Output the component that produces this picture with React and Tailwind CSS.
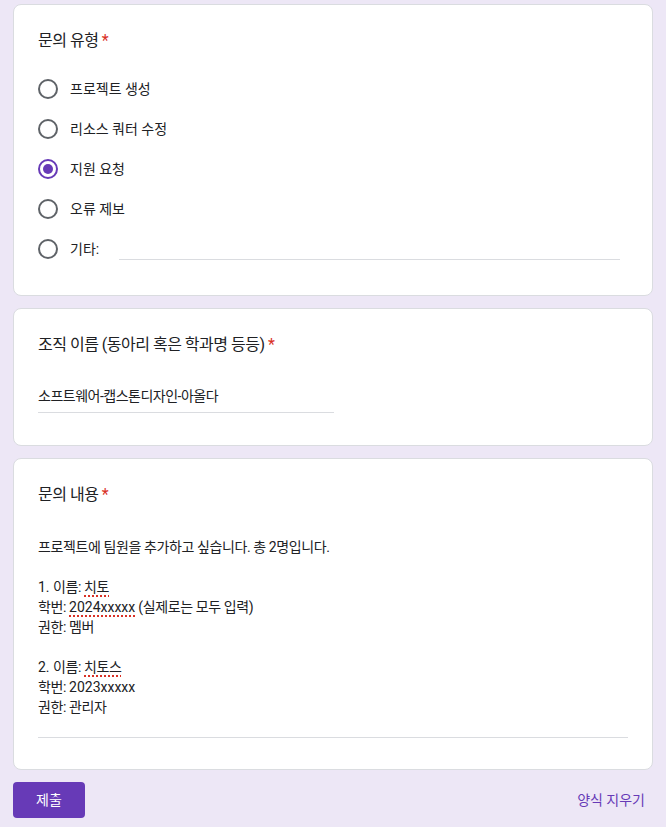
const options = ['프로젝트 생성', '리소스 쿼터 수정', '지원 요청', '오류 제보']

const Radio = ({ checked }) => (
  <span className={`flex h-5 w-5 shrink-0 items-center justify-center rounded-full border-2 ${checked ? 'border-[#673ab7]' : 'border-[#5f6368]'}`}>
    {checked && <span className="h-2.5 w-2.5 rounded-full bg-[#673ab7]" />}
  </span>
)

const Title = ({ children }) => (
  <h2 className="text-base leading-6 tracking-[-0.5px] text-[#202124]">
    {children} <span className="text-[#d93025]">*</span>
  </h2>
)

const Spell = ({ children }) => (
  <span className="underline decoration-dotted decoration-[#d93025] decoration-2 underline-offset-[3px]">{children}</span>
)

const Latin = ({ children }) => <span className="tracking-normal">{children}</span>

export default function App() {
  return (
    <div
      className="min-h-[827px] bg-[#ede7f6] px-[13px] pt-1 text-[#202124]"
      style={{ fontFamily: 'Roboto, "Noto Sans CJK KR", sans-serif' }}
    >
      <div className="flex flex-col gap-3">
        <div className="rounded-lg border border-[#dadce0] bg-white px-6 pt-6 pb-[26px]">
          <Title>문의 유형</Title>
          <div className="mt-4 flex flex-col">
            {options.map((o, i) => (
              <div key={o} className="flex h-10 items-center gap-3 text-sm">
                <Radio checked={i === 2} />
                <span>{o}</span>
              </div>
            ))}
            <div className="flex h-10 items-center gap-3 text-sm">
              <Radio />
              <span>기타:</span>
              <span className="ml-2 mr-2 mt-5 h-px flex-1 bg-[#dadce0]" />
            </div>
          </div>
        </div>

        <div className="rounded-lg border border-[#dadce0] bg-white px-6 pt-6 pb-8">
          <Title>조직 이름 (동아리 혹은 학과명 등등)</Title>
          <div className="mt-[29px] w-[296px] border-b border-[#dadce0] pb-1.5 text-sm leading-5 tracking-[-0.5px]">
            소프트웨어-캡스톤디자인-아올다
          </div>
        </div>

        <div className="rounded-lg border border-[#dadce0] bg-white px-6 pt-6 pb-[31px]">
          <Title>문의 내용</Title>
          <div className="mt-[30px] border-b border-[#dadce0] pb-5 text-sm leading-5 tracking-[-0.4px]">
            <p>프로젝트에 팀원을 추가하고 싶습니다. 총 2명입니다.</p>
            <p>&nbsp;</p>
            <p><Latin>1. </Latin>이름: <Spell>치토</Spell></p>
            <p>학번: <Spell><Latin>2024xxxxx</Latin></Spell> (실제로는 모두 입력)</p>
            <p>권한: 멤버</p>
            <p>&nbsp;</p>
            <p><Latin>2. </Latin>이름: <Spell>치토스</Spell></p>
            <p>학번: <Latin>2023xxxxx</Latin></p>
            <p>권한: 관리자</p>
          </div>
        </div>
      </div>

      <div className="mt-3 flex items-center justify-between">
        <button className="h-9 w-[72px] rounded bg-[#673ab7] text-sm text-white">제출</button>
        <button className="mr-2 text-sm text-[#673ab7]">양식 지우기</button>
      </div>
    </div>
  )
}
